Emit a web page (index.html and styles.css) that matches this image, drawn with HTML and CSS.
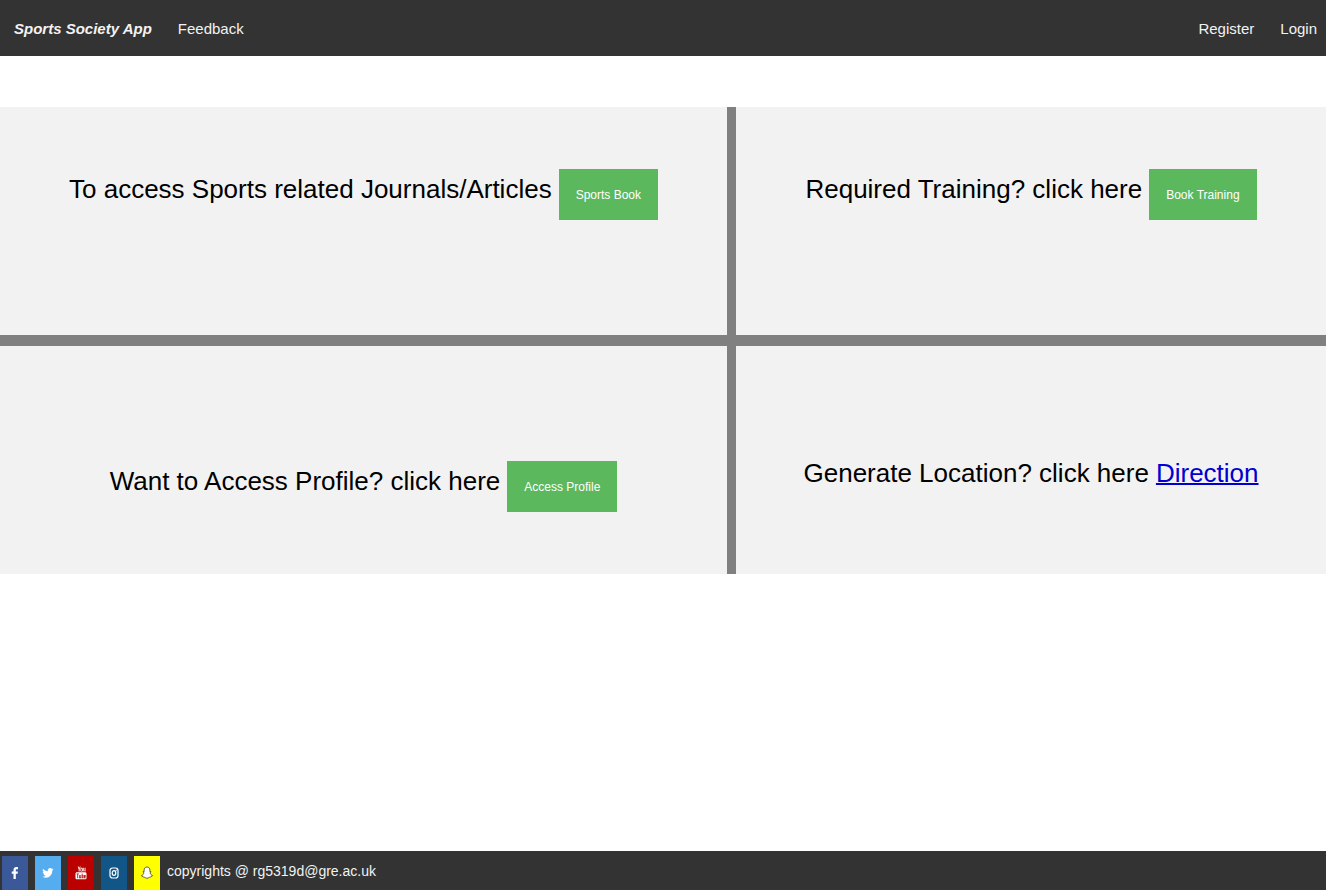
FILE: index.html
```html
<!DOCTYPE html>
<html lang="en">
<head>
<meta charset="utf-8">
<title>Sports Society App</title>
<link rel="stylesheet" href="styles.css">
</head>
<body>
<nav class="navbar">
  <a class="brand" href="#">Sports Society App</a>
  <a href="#">Feedback</a>
  <div class="account">
    <a href="#">Register</a>
    <a href="#">Login</a>
  </div>
</nav>
<main class="panels">
  <section class="panel">
    <p class="prompt"><span>To access Sports related Journals/Articles</span> <button class="action" type="button">Sports Book</button></p>
  </section>
  <section class="panel">
    <p class="prompt"><span>Required Training? click here</span> <button class="action" type="button">Book Training</button></p>
  </section>
  <section class="panel panel-low">
    <p class="prompt"><span>Want to Access Profile? click here</span> <button class="action" type="button">Access Profile</button></p>
  </section>
  <section class="panel panel-link">
    <p class="prompt"><span>Generate Location? click here</span> <a href="#">Direction</a></p>
  </section>
</main>
<footer class="footer">
  <a class="social facebook" href="#" aria-label="Facebook"><svg viewBox="0 0 12 14"><path d="M9 1.2v2.1H7.8c-.8 0-1 .4-1 1v1.2h2.1l-.3 2.2H6.800V13H4.500V7.700H2.700V5.500h1.800V3.900C4.500 2 5.600 1 7.300 1 8.100 1 8.800 1.100 9 1.200z"/></svg></a>
  <a class="social twitter" href="#" aria-label="Twitter"><svg viewBox="0 0 12 14"><path d="M11.500 3.300c-.3.500-.7.900-1.200 1.200.2 4-2.800 7.200-6.400 7.200-1.300 0-2.500-.4-3.500-1 1.200.1 2.400-.2 3.300-1-1 0-1.800-.7-2.100-1.600h1C1.500 7.900.7 6.900.7 5.700c.3.200.7.300 1 .3C.7 5.300.4 3.900 1 2.800c1.200 1.500 2.900 2.400 4.800 2.500C5.400 3.600 6.600 2.100 8.200 2.100c.7 0 1.300.3 1.700.8.500-.1 1-.3 1.400-.6-.1.500-.5 1-1 1.300.4 0 .8-.1 1.200-.3z"/></svg></a>
  <a class="social youtube" href="#" aria-label="YouTube"><svg viewBox="0 0 12 14"><path d="M2.700.4h.9l.6 2 .6-2h.9L4.600 3.500v2h-.9v-2zM6.600 1.700c.8 0 1.200.5 1.200 1.200v1.500c0 .8-.5 1.200-1.200 1.200s-1.200-.4-1.200-1.200V2.900c0-.7.4-1.200 1.200-1.200zm0 .8c-.3 0-.4.2-.4.500v1.400c0 .3.100.5.4.5s.4-.2.4-.5V3c0-.3-.1-.5-.4-.5zM8.300 1.800h.8v2.700c0 .3.400.2.600-.1V1.800h.8v3.700h-.8v-.4c-.6.700-1.400.6-1.400-.3z"/><path fill-rule="evenodd" d="M2 6.300h8c1 0 1.500.6 1.500 1.500v4c0 1-.5 1.500-1.500 1.500H2c-1 0-1.500-.5-1.500-1.500v-4C.5 6.900 1 6.300 2 6.300zM1.500 7.500v.8h.8v4h.8v-4h.8v-.8zm2.600 1.400v3.400h2V8.900h-.7v2.600h-.6V8.900zm2.600-1.400v4.800h1.800V8.900h-1V7.500zm.8 2h.3v2h-.3zM9 8.900v3.400h1.700v-1h-.6v.3h-.4v-.8h1V8.900zm.7.7h.4v.5h-.4z"/></svg></a>
  <a class="social instagram" href="#" aria-label="Instagram"><svg viewBox="0 0 12 14"><g fill="none" stroke="currentColor" stroke-width="1.200"><rect x="2" y="2" width="8" height="10" rx="2.500"/><ellipse cx="6" cy="7" rx="1.800" ry="2.300"/></g><circle cx="8.300" cy="4.200" r=".6"/></svg></a>
  <a class="social snapchat" href="#" aria-label="Snapchat"><svg viewBox="0 0 12 14"><path stroke="#222" stroke-width=".7" stroke-linejoin="round" d="M6 1c1.800 0 2.900 1.300 2.900 3v1.700l1-.1c.4.400 0 .8-.8 1.200.3 1.400 1.200 2.400 2.400 2.800 0 .6-.7.800-1.600 1-.2.700-.4.700-1.200.6-1 0-1.500 1.200-2.700 1.200s-1.700-1.200-2.700-1.200c-.8.100-1 .1-1.200-.6-.9-.2-1.600-.4-1.600-1 1.200-.4 2.100-1.400 2.400-2.800-.8-.4-1.200-.8-.8-1.200l1 .1V4C3.100 2.300 4.200 1 6 1z"/></svg></a>
  <span>copyrights @ rg5319d@gre.ac.uk</span>
</footer>
</body>
</html>
```
FILE: styles.css
```css
* { box-sizing: border-box; }

body {
  margin: 0;
  min-height: 100vh;
  display: flex;
  flex-direction: column;
  background: #fff;
  font-family: "Liberation Sans", Arial, sans-serif;
  font-size: 15px;
}

.navbar {
  display: flex;
  align-items: center;
  gap: 26px;
  min-height: 56px;
  padding: 0 9px 0 14px;
  background: #333;
}

.navbar a { color: #f2f2f2; text-decoration: none; }
.navbar .brand { font-weight: bold; font-style: italic; }
.account { display: flex; gap: 26px; margin-left: auto; }

.panels {
  display: grid;
  grid-template-columns: 727fr 590fr;
  grid-auto-rows: minmax(228px, auto);
  gap: 11px 9px;
  margin-top: 51px;
  background: #808080;
}

.panel { padding-top: 62px; background: #f2f2f2; }
.panel-low { padding-top: 115px; }
.panel-link { padding-top: 107px; }

.prompt {
  display: flex;
  justify-content: center;
  gap: 7px;
  margin: 0;
  font-size: 26px;
  line-height: 40px;
}

.prompt a { color: #0000d0; text-decoration-thickness: 2px; }

.action {
  height: 51px;
  padding: 0 17px;
  border: 0;
  background: #5cb85c;
  color: #fff;
  font-family: inherit;
  font-size: 12px;
}

.footer {
  display: flex;
  align-items: center;
  gap: 7px;
  min-height: 39px;
  margin-top: auto;
  padding-left: 2px;
  background: #333;
  color: #f2f2f2;
  font-size: 14px;
}

.social {
  display: flex;
  align-items: center;
  justify-content: center;
  align-self: flex-end;
  width: 26px;
  height: 34px;
  color: #fff;
}

.social svg { width: 12px; height: 14px; fill: currentColor; }
.facebook { background: #3b5998; }
.twitter { background: #55acee; }
.youtube { background: #b00; }
.instagram { background: #125688; }
.snapchat { background: #ff0; }
```
